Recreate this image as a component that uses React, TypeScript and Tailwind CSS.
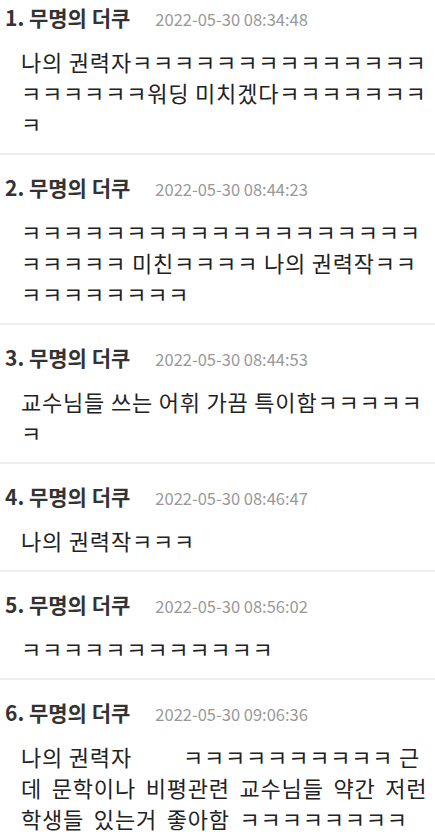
import React from "react";

type Comment = {
  no: number;
  name: string;
  date: string;
  body: React.ReactNode;
};

const k = (n: number) => "ㅋ".repeat(n);

const comments: Comment[] = [
  {
    no: 1,
    name: "무명의 더쿠",
    date: "2022-05-30 08:34:48",
    body: `나의 권력자${k(20)}워딩 미치겠다${k(8)}`,
  },
  {
    no: 2,
    name: "무명의 더쿠",
    date: "2022-05-30 08:44:23",
    body: `${k(24)} 미친${k(4)} 나의 권력작${k(10)}`,
  },
  {
    no: 3,
    name: "무명의 더쿠",
    date: "2022-05-30 08:44:53",
    body: `교수님들 쓰는 어휘 가끔 특이함${k(6)}`,
  },
  {
    no: 4,
    name: "무명의 더쿠",
    date: "2022-05-30 08:46:47",
    body: `나의 권력작${k(3)}`,
  },
  {
    no: 5,
    name: "무명의 더쿠",
    date: "2022-05-30 08:56:02",
    body: k(12),
  },
  {
    no: 6,
    name: "무명의 더쿠",
    date: "2022-05-30 09:06:36",
    body: (
      <>
        나의 권력자<span className="inline-block w-[51px]"></span>
        {`${k(10)} `}
        <span className="[word-spacing:4px]">
          근데 문학이나 비평관련 교수님들 약간 저런 학생들 있는거 좋아함 {k(8)}
        </span>
      </>
    ),
  },
];

const CommentItem = ({ c, first }: { c: Comment; first: boolean }) => {
  return (
    <li className={`border-b-2 border-[#eeeeee] px-[5px] pb-[14px] ${first ? "pt-[5px]" : "pt-[20px]"}`}>
      <div className="flex items-baseline h-[24px] leading-[24px]">
        <span className="text-[21px] font-bold text-[#333333]">
          {c.no}. {c.name}
        </span>
        <span className="ml-[25px] text-[16.5px] text-[#999999]">{c.date}</span>
      </div>
      <p className="mt-[17px] pl-[16px] text-[22px] leading-[31px] tracking-[0.8px] text-[#222222]">
        {c.body}
      </p>
    </li>
  );
};

export default function App() {
  return (
    <div
      className="w-[435px] bg-white overflow-hidden"
      style={{ fontFamily: '"Noto Sans CJK KR", "Noto Sans", sans-serif' }}
    >
      <ul>
        {comments.map((c, i) => (
          <CommentItem c={c} first={i === 0} key={c.no} />
        ))}
      </ul>
    </div>
  );
}
